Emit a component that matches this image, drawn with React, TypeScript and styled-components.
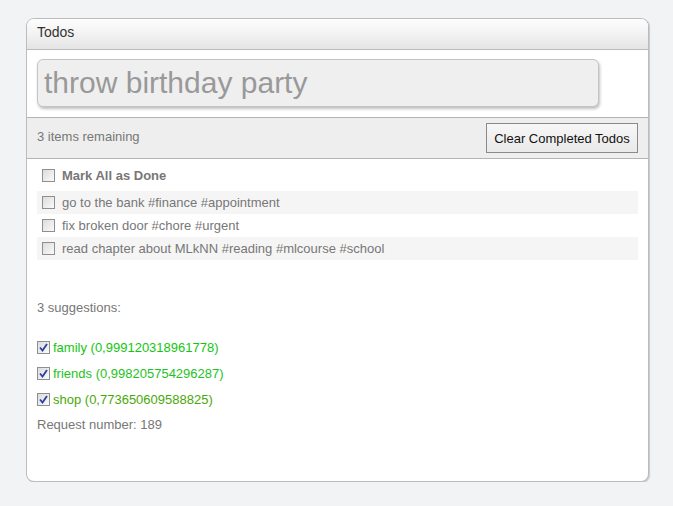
import React from "react";
import styled, { createGlobalStyle } from "styled-components";

const Global = createGlobalStyle`
  html, body { margin: 0; padding: 0; background: #f2f3f5; }
  body { font-family: "Liberation Sans", Arial, sans-serif; }
`;

const Page = styled.div`
  padding: 18px 0 0 26px;
`;

const Card = styled.div`
  width: 621px;
  height: 462px;
  background: #fff;
  border: 1px solid #bcbcbc;
  border-radius: 8px;
  box-shadow: 1px 1px 1px #c8c8c8;
  overflow: hidden;
  display: flex;
  flex-direction: column;
`;

const Header = styled.div`
  border-bottom: 1px solid #bbb;
  background: linear-gradient(#fdfdfd 0%, #f4f4f4 45%, #e4e4e4 100%);
  padding: 0 0 4px 10px;
  box-sizing: border-box;
  height: 31px;
  display: flex;
  align-items: center;
  font-size: 14px;
  color: #333;
`;

const InputSection = styled.div`
  height: 67px;
  padding: 9px 0 0 10px;
  box-sizing: border-box;
`;

const BigInput = styled.input`
  width: 562px;
  height: 48px;
  box-sizing: border-box;
  background: #efefef;
  border: 1px solid #c4c4c4;
  border-radius: 6px;
  box-shadow: 1px 2px 3px rgba(0, 0, 0, 0.25);
  padding: 0 6px;
  font-family: "Liberation Sans", Arial, sans-serif;
  font-size: 30px;
  color: #999;
  outline: none;
  &::placeholder { color: #999; }
`;

const StatusBar = styled.div`
  height: 40px;
  border-top: 1px solid #b4b4b4;
  border-bottom: 1px solid #b4b4b4;
  background: #eeeeee;
  display: flex;
  align-items: center;
  justify-content: space-between;
  padding: 0 10px;
`;

const Remaining = styled.span`
  font-size: 13px;
  color: #777;
  margin-top: -3px;
`;

const ClearButton = styled.button`
  width: 152px;
  height: 30px;
  border: 1px solid #8a8a8a;
  background: linear-gradient(#f7f7f7, #e9e9e9);
  font-family: "Liberation Sans", Arial, sans-serif;
  font-size: 13px;
  color: #111;
  padding: 0;
  margin-top: 0;
`;

const Body = styled.div`
  padding: 8px 10px 0 10px;
  display: flex;
  flex-direction: column;
`;

const Row = styled.div<{ $shaded?: boolean; $height?: number }>`
  height: ${(p) => p.$height ?? 23}px;
  display: flex;
  align-items: center;
  gap: 7px;
  padding-left: 5px;
  background: ${(p) => (p.$shaded ? "#f5f5f5" : "transparent")};
  font-size: 13px;
  color: #777;
`;

const MarkAll = styled(Row)`
  font-weight: bold;
  color: #777;
  margin-bottom: 8px;
`;

const Box = styled.span<{ $checked?: boolean }>`
  width: 11px;
  height: 11px;
  flex: none;
  border: 1px solid #8f8f8f;
  background: linear-gradient(135deg, #dcdcdc, #fafafa);
  display: flex;
  align-items: center;
  justify-content: center;
`;

const Label = styled.span`
  white-space: nowrap;
`;

const Plain = styled.div<{ $top: number }>`
  margin-top: ${(p) => p.$top}px;
  font-size: 13px;
  color: #777;
  height: 14px;
  line-height: 14px;
`;

const Suggestions = styled.div`
  margin-top: 25px;
  display: flex;
  flex-direction: column;
  gap: 12px;
`;

const Suggestion = styled.div<{ $color: string }>`
  display: flex;
  align-items: center;
  gap: 3px;
  height: 14px;
  font-size: 13px;
  color: ${(p) => p.$color};
`;

const Check = () => (
  <svg width="9" height="9" viewBox="0 0 9 9">
    <path d="M1 4.5 L3.5 7.5 L8 1" fill="none" stroke="#2b3fa0" strokeWidth="1.8" />
  </svg>
);

const todos = [
  "go to the bank #finance #appointment",
  "fix broken door #chore #urgent",
  "read chapter about MLkNN #reading #mlcourse #school",
];

const suggestions = [
  { text: "family (0,999120318961778)", color: "#12c612" },
  { text: "friends (0,998205754296287)", color: "#1ec31e" },
  { text: "shop (0,773650609588825)", color: "#4aa808" },
];

export default function App() {
  return (
    <Page>
      <Global />
      <Card>
        <Header>Todos</Header>
        <InputSection>
          <BigInput placeholder="throw birthday party" />
        </InputSection>
        <StatusBar>
          <Remaining>3 items remaining</Remaining>
          <ClearButton>Clear Completed Todos</ClearButton>
        </StatusBar>
        <Body>
          <MarkAll $height={16}>
            <Box />
            <Label>Mark All as Done</Label>
          </MarkAll>
          {todos.map((t, i) => (
            <Row key={t} $shaded={i % 2 === 0}>
              <Box />
              <Label>{t}</Label>
            </Row>
          ))}
          <Plain $top={41}>3 suggestions:</Plain>
          <Suggestions>
            {suggestions.map((s) => (
              <Suggestion key={s.text} $color={s.color}>
                <Box $checked>
                  <Check />
                </Box>
                <Label>{s.text}</Label>
              </Suggestion>
            ))}
          </Suggestions>
          <Plain $top={12}>Request number: 189</Plain>
        </Body>
      </Card>
    </Page>
  );
}
